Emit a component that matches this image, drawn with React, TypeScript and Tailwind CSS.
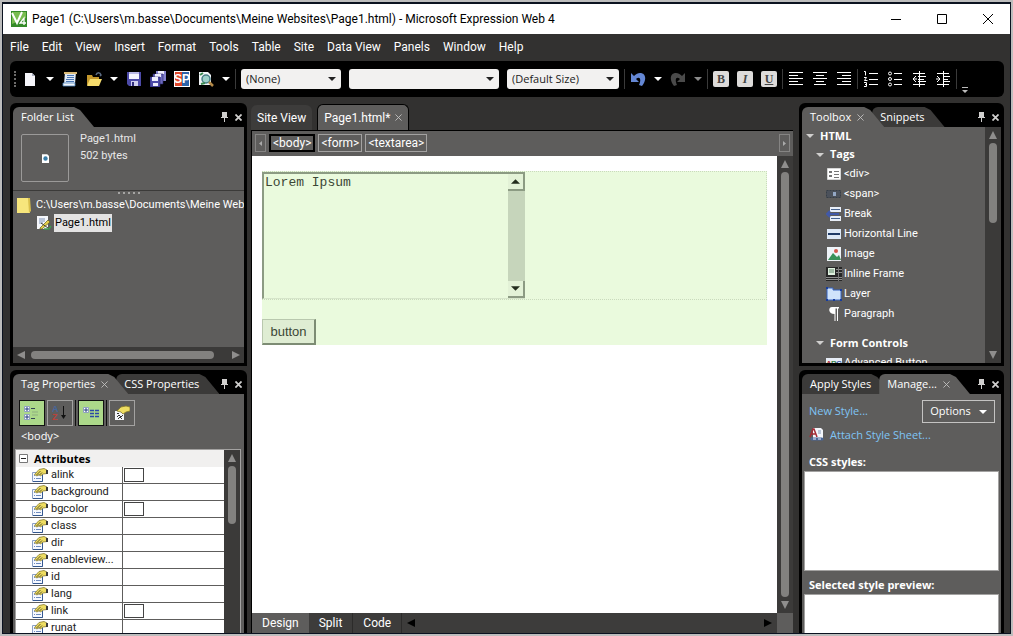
import { ReactNode } from "react"

const menuItems = ["File", "Edit", "View", "Insert", "Format", "Tools", "Table", "Site", "Data View", "Panels", "Window", "Help"]

const attributes = [
  { name: "alink", color: true },
  { name: "background" },
  { name: "bgcolor", color: true },
  { name: "class" },
  { name: "dir" },
  { name: "enableviewstate", label: "enableview..." },
  { name: "id" },
  { name: "lang" },
  { name: "link", color: true },
  { name: "runat" },
]

/* ---------- small helpers ---------- */

const Icon = ({ children }: { children: ReactNode }) => (
  <svg viewBox="0 0 16 16" className="w-4 h-4 shrink-0" aria-hidden="true">{children}</svg>
)

const Caret = ({ className = "fill-white" }: { className?: string }) => (
  <svg viewBox="0 0 8 4" className={`w-2 h-1 shrink-0 ${className}`} aria-hidden="true"><path d="M0 0h8L4 4z" /></svg>
)

const Arrow = ({ d, className = "fill-[#8f8e8d]" }: { d: string; className?: string }) => (
  <svg viewBox="0 0 8 8" className={`w-2 h-2 ${className}`} aria-hidden="true"><path d={d} /></svg>
)

const UP = "M0 8L4 0l4 8z"
const DOWN = "M0 0h8L4 8z"
const LEFT = "M8 0v8L0 4z"
const RIGHT = "M0 0v8l8-4z"

const CloseX = ({ className = "w-[7px] h-[7px] stroke-[#c4c3c2]", width = 1 }: { className?: string; width?: number }) => (
  <svg viewBox="0 0 8 8" className={className} strokeWidth={width} aria-hidden="true"><path d="M.5.5l7 7M7.5.5l-7 7" /></svg>
)

const VScroll = ({ thumb }: { thumb: string }) => (
  <div className="w-4 shrink-0 bg-[#3b3a39] flex flex-col items-center py-1 gap-1">
    <Arrow d={UP} />
    <div className="flex-1 w-2 min-h-0"><div className={`w-2 rounded bg-[#82817f] ${thumb}`} /></div>
    <Arrow d={DOWN} />
  </div>
)

const Separator = () => <span className="w-px h-5 bg-[#3a3a3a] -mx-[3px]" />

const ToolButton = ({ label, children }: { label: string; children: ReactNode }) => (
  <button aria-label={label} className="shrink-0">{children}</button>
)

const Select = ({ label, value, size }: { label: string; value: string; size: string }) => (
  <div className={`grid items-center shrink-0 ${size}`}>
    <select aria-label={label} className="col-start-1 row-start-1 appearance-none w-full h-full rounded-[3px] bg-[#f2f1f0] text-[#222] text-[11px] pl-[5px] pr-5">
      <option>{value}</option>
    </select>
    <div className="col-start-1 row-start-1 justify-self-end pr-[5px] pointer-events-none"><Caret className="fill-[#222]" /></div>
  </div>
)

/* ---------- panel with slanted tabs ---------- */

type TabInfo = { label: string; active?: boolean; closable?: boolean }

const Panel = ({ tabs, className, children }: { tabs: TabInfo[]; className: string; children: ReactNode }) => (
  <section className={`bg-black rounded-t-md px-[3px] pt-1 flex flex-col min-h-0 ${className}`}>
    <div className="flex items-end h-5 shrink-0">
      {tabs.map((tab) => (
        <button
          key={tab.label}
          className={`h-full flex items-center gap-[6px] pl-2 pr-5 -mr-[12px] rounded-tl-md text-[11px] text-white whitespace-nowrap [clip-path:polygon(0_0,calc(100%-20px)_0,calc(100%-14px)_3px,100%_100%,0_100%)] ${tab.active ? "bg-[#5e5d5c] relative z-10" : "bg-[#3b3a39]"}`}
        >
          {tab.label}
          {tab.closable && <CloseX />}
        </button>
      ))}
      <div className="ml-auto h-full flex items-center gap-[6px] pr-[2px]">
        <button aria-label="Pin">
          <svg viewBox="0 0 9 10" className="w-[9px] h-[10px] fill-[#d0cfce]" aria-hidden="true"><path d="M2 0h5v5h1v1H5v4H4V6H1V5h1z" /></svg>
        </button>
        <button aria-label="Close"><CloseX className="w-[7px] h-[7px] stroke-[#d0cfce]" width={2} /></button>
      </div>
    </div>
    <div className="flex-1 min-h-0 bg-[#5e5d5c] flex flex-col overflow-hidden">{children}</div>
  </section>
)

/* ---------- icons ---------- */

const FloppyIcon = () => (
  <Icon>
    <path d="M1 1h14v14H3l-2-2z" fill="#4c4aa8" />
    <path d="M3 1h10v7H3z" fill="#f4f4ff" />
    <path d="M3 1h10v2H3z" fill="#b9b8e6" />
    <path d="M5 10h7v5H5z" fill="#cfd0ee" />
    <path d="M6 11h2v4H6z" fill="#2f2d7c" />
  </Icon>
)

const PropIcon = () => (
  <Icon>
    <path d="M.5 5.500h10v9H.5z" fill="#f6f9ff" stroke="#8aa0c6" />
    <path d="M10.500 8v6.500H1" fill="none" stroke="#35588f" />
    <path d="M2 8.500h1M2 11.500h1M4 11.500h5" stroke="#6f8cc0" />
    <path d="M2.500 7.500L7 2.500l5-1 3 1.500v3.500l-4 .5-2.500 2-1.500-1.500-2 1.500z" fill="#eedd62" stroke="#85782c" strokeWidth=".8" />
    <path d="M4.500 8l4-4M7 8.500l3-3" stroke="#4d4720" strokeWidth=".9" />
    <path d="M14 3h2v4h-2z" fill="#3a3a3a" />
  </Icon>
)

const PageEditIcon = () => (
  <Icon>
    <path d="M1 1h11v13H1z" fill="#f5f7fb" />
    <path d="M3 4h6M3 6h6M3 8h4" stroke="#7f93b5" />
    <path d="M4 13l8-8 2 2-8 7H4z" fill="#e6cf4a" stroke="#5d5a20" strokeWidth=".7" />
    <path d="M8 14h5l2-3" stroke="#3f9a50" strokeWidth="1.500" fill="none" />
    <path d="M5 8l7 5" stroke="#443" />
  </Icon>
)

const UndoIcon = ({ flip, color }: { flip?: boolean; color: string }) => (
  <Icon>
    <g transform={flip ? "matrix(-1 0 0 1 16 0)" : undefined}>
      <path d="M1 2v9h8L6 8c3-3 6-1 3 6l3 1c5-6 4-13-2-13-2 0-4 1-6 3z" fill={color} />
    </g>
  </Icon>
)

const AlignIcon = ({ d }: { d: string }) => (
  <Icon><path d={d} stroke="#fff" strokeWidth="1" fill="none" /></Icon>
)

const StyleToggle = ({ label, className, children }: { label: string; className: string; children: string }) => (
  <button aria-label={label} className={`w-4 h-4 shrink-0 rounded-[2px] bg-[#dddbda] text-[#444] text-xs leading-4 font-bold font-['Liberation_Serif',serif] ${className}`}>{children}</button>
)

/* ---------- title, menu, toolbar ---------- */

const TitleBar = () => (
  <header className="h-[30px] shrink-0 bg-white flex items-center pl-2 text-black">
    <svg viewBox="0 0 16 16" className="w-4 h-4" aria-hidden="true">
      <path d="M0 0h16v16H0z" fill="#348a28" />
      <path d="M1 1h14v6L1 13z" fill="#79bd50" />
      <path d="M1 2l5 10 5-11" fill="none" stroke="#fff" strokeWidth="2" />
      <path d="M13 14V7l-4 5h6" fill="none" stroke="#fff" strokeWidth="1.300" />
    </svg>
    <h1 className="pl-[5px] text-xs whitespace-nowrap font-[Roboto,sans-serif]">Page1 (C:\Users\m.basse\Documents\Meine Websites\Page1.html) - Microsoft Expression Web 4</h1>
    <div className="ml-auto pr-[17px] flex items-center gap-9">
      <button aria-label="Minimize"><svg viewBox="0 0 10 10" className="w-[10px] h-[10px]"><path d="M0 5.500h10" stroke="#000" /></svg></button>
      <button aria-label="Maximize"><svg viewBox="0 0 10 10" className="w-[10px] h-[10px]"><path d="M.5.5h9v9h-9z" stroke="#000" fill="none" /></svg></button>
      <button aria-label="Close"><svg viewBox="0 0 10 10" className="w-[10px] h-[10px]"><path d="M0 0l10 10M10 0L0 10" stroke="#000" /></svg></button>
    </div>
  </header>
)

const MenuBar = () => (
  <nav className="h-[26px] mb-px shrink-0 flex items-center gap-[13px] pl-[7px] text-white text-xs font-[Roboto,sans-serif]">
    {menuItems.map((item) => <button key={item} className="whitespace-nowrap">{item}</button>)}
  </nav>
)

const Toolbar = () => (
  <div className="h-9 shrink-0 ml-[7px] mr-[6px] rounded-md bg-black flex items-center gap-2 pl-1 overflow-hidden">
    <span className="w-1 h-4 -mr-1 shrink-0 border-l-2 border-dotted border-[#6b6a69]" />
    <ToolButton label="New">
      <Icon><path d="M3 2h7l3 3v10H3z" fill="#f5f5fa" /><path d="M10 2v3h3z" fill="#a9afc0" /></Icon>
    </ToolButton>
    <ToolButton label="New options"><Caret /></ToolButton>
    <ToolButton label="Properties">
      <Icon>
        <path d="M3 1h11l-1 12H2z" fill="#dfeaf8" />
        <path d="M5 4.500h7M5 6.500h7M4 8.500h8M4 10.500h8" stroke="#4a77b5" />
        <path d="M2 1h13v2H2z" fill="#d9ba78" />
        <path d="M1 12h12v3H1z" fill="#f2f6fa" stroke="#4d83bd" strokeWidth=".8" />
      </Icon>
    </ToolButton>
    <ToolButton label="Open">
      <Icon>
        <path d="M1 4h5l1 2h6v8H1z" fill="#c4982c" />
        <path d="M4 8h12l-3 7H1z" fill="#f6dc6c" />
        <path d="M10 4c1-3 4-3 5 0l-1 1" stroke="#5b6b82" fill="none" strokeWidth="1.500" />
      </Icon>
    </ToolButton>
    <ToolButton label="Open options"><Caret /></ToolButton>
    <ToolButton label="Save"><FloppyIcon /></ToolButton>
    <ToolButton label="Save all">
      <Icon>
        <path d="M6 0h10v10H6z" fill="#8583cd" />
        <path d="M8 0h6v3H8z" fill="#eeeefc" />
        <path d="M3 3h10v10H3z" fill="#6b69bb" stroke="#25246a" strokeWidth=".6" />
        <path d="M5 3h6v3H5z" fill="#eeeefc" />
        <path d="M0 6h10v10H0z" fill="#4c4aa8" stroke="#25246a" strokeWidth=".6" />
        <path d="M2 6h6v4H2zM3 12h5v3H3z" fill="#eeeefc" />
      </Icon>
    </ToolButton>
    <ToolButton label="SuperPreview">
      <svg viewBox="0 0 16 16" className="w-4 h-4 font-['Liberation_Sans',sans-serif] font-bold">
        <path d="M0 0h16v16H0z" fill="#fff" />
        <path d="M1 1h7v14H1z" fill="#e0462a" />
        <path d="M8 1h7v14H8z" fill="#2c63a8" />
        <text x="0" y="12" fontSize="12" fill="#fff">S</text>
        <text x="8" y="12" fontSize="12" fill="#fff">P</text>
      </svg>
    </ToolButton>
    <ToolButton label="Preview">
      <Icon>
        <path d="M1 1h9l3 3v10H1z" fill="#f2f5f8" />
        <circle cx="8" cy="8" r="4" fill="#9cd0c8" stroke="#477d85" strokeWidth="1.500" />
        <path d="M2 4l3-2M3 13l4-1" stroke="#3b8b52" strokeWidth="2" />
        <path d="M11 11l4 4" stroke="#b48a48" strokeWidth="2.500" />
      </Icon>
    </ToolButton>
    <ToolButton label="Preview options"><Caret /></ToolButton>
    <Separator />
    <Select label="Style" value="(None)" size="w-[100px] h-5" />
    <Select label="Font" value="" size="w-[150px] h-5" />
    <Select label="Font size" value="(Default Size)" size="w-28 h-5" />
    <Separator />
    <ToolButton label="Undo"><UndoIcon color="#6487d4" /></ToolButton>
    <ToolButton label="Undo history"><Caret /></ToolButton>
    <ToolButton label="Redo"><UndoIcon flip color="#4a4a4a" /></ToolButton>
    <ToolButton label="Redo history"><Caret className="fill-[#8b8b8b]" /></ToolButton>
    <Separator />
    <StyleToggle label="Bold" className="">B</StyleToggle>
    <StyleToggle label="Italic" className="italic">I</StyleToggle>
    <StyleToggle label="Underline" className="underline">U</StyleToggle>
    <Separator />
    <ToolButton label="Align left"><AlignIcon d="M1 1.500h14M1 4.500h9M1 7.500h14M1 10.500h9M1 13.500h14" /></ToolButton>
    <ToolButton label="Center"><AlignIcon d="M1 1.500h14M4 4.500h8M1 7.500h14M4 10.500h8M2 13.500h12" /></ToolButton>
    <ToolButton label="Align right"><AlignIcon d="M1 1.500h14M6 4.500h9M1 7.500h14M6 10.500h9M1 13.500h14" /></ToolButton>
    <Separator />
    <ToolButton label="Numbering"><AlignIcon d="M6 2.500h9M6 8.500h9M6 13.500h9M1 .5h1.500v4M1 6.500h2.500L1.500 9.500h3M1 11.500h2.500v4H1M2 13.500h1" /></ToolButton>
    <ToolButton label="Bullets">
      <Icon>
        <path d="M7 2.500h8M7 8.500h8M7 13.500h8" stroke="#fff" />
        <g fill="none" stroke="#fff"><circle cx="3" cy="2.500" r="1.500" /><circle cx="3" cy="8" r="1.500" /><circle cx="3" cy="13.500" r="1.500" /></g>
      </Icon>
    </ToolButton>
    <ToolButton label="Decrease indent"><AlignIcon d="M2 2.500h12M7 5.500h8M7 8.500h6M7 10.500h8M2 13.500h12M8.500 0v16M5 5L2 8l3 3M2 8h4" /></ToolButton>
    <ToolButton label="Increase indent"><AlignIcon d="M2 2.500h12M8 5.500h7M8 8.500h5M8 10.500h7M2 13.500h12M8.500 0v16M2 5l3 3-3 3M1 8h4" /></ToolButton>
    <Separator />
    <button aria-label="More" className="self-end pb-1"><svg viewBox="0 0 6 6" className="w-[6px] h-[6px] fill-[#bbb]"><path d="M0 0h6v1H0zM0 3h6L3 6z" /></svg></button>
  </div>
)

/* ---------- left column ---------- */

const FolderList = () => (
  <Panel className="h-[263px] shrink-0 pb-[3px]" tabs={[{ label: "Folder List", active: true }]}>
    <div className="h-16 shrink-0 border-b border-[#3b3a39] flex gap-[11px] pl-2 pt-[7px] text-[11px] text-[#e8e8e8] font-[Roboto,sans-serif]">
      <div className="w-12 h-12 rounded-[2px] border border-[#9b9a99] grid place-items-center">
        <svg viewBox="0 0 8 10" className="w-[7px] h-[9px]" aria-hidden="true"><path d="M0 0h6l2 2v8H0z" fill="#fff" /><circle cx="4" cy="5" r="2.500" fill="#397da8" /></svg>
      </div>
      <div className="leading-[17px] -mt-1">
        <p>Page1.html</p>
        <p>502 bytes</p>
      </div>
    </div>
    <div className="flex justify-center gap-[3px] pt-px">
      {[0, 1, 2, 3, 4].map((n) => <i key={n} className="w-[2px] h-[2px] bg-[#a5a4a3]" />)}
    </div>
    <ul className="flex-1 overflow-hidden text-[11px] text-white whitespace-nowrap pt-[2px] font-[Roboto,sans-serif]">
      <li className="flex items-center h-[18px] gap-[5px] pl-1">
        <svg viewBox="0 0 14 16" className="w-[14px] h-4 shrink-0" aria-hidden="true"><path d="M0 1h13v15H0z" fill="#f7e67c" /><path d="M11 1h2l1 13-2 2z" fill="#d9c04c" /></svg>
        C:\Users\m.basse\Documents\Meine Websites
      </li>
      <li className="flex items-center h-[18px] gap-[2px] pl-[23px]">
        <PageEditIcon />
        <span className="bg-[#e4e3e3] text-black px-px leading-[18px]">Page1.html</span>
      </li>
    </ul>
    <div className="h-4 shrink-0 bg-[#3b3a39] flex items-center gap-[6px] px-1">
      <Arrow d={LEFT} />
      <div className="flex-1"><div className="h-2 w-[94%] rounded bg-[#82817f]" /></div>
      <Arrow d={RIGHT} />
    </div>
  </Panel>
)

const SquareButton = ({ label, on, children }: { label: string; on?: boolean; children: ReactNode }) => (
  <button aria-label={label} className={`w-[26px] h-[26px] border grid place-items-center ${on ? "bg-[#acd88a] border-[#111]" : "border-[#a3a2a1]"}`}>{children}</button>
)

const TagProperties = () => (
  <Panel className="flex-1" tabs={[{ label: "Tag Properties", active: true, closable: true }, { label: "CSS Properties" }]}>
    <div className="flex items-center gap-[2px] pl-[6px] pt-[6px]">
      <SquareButton label="Categorized" on>
        <Icon>
          <path d="M.5 1.500h5v5h-5zM.5 9.500h5v5h-5z" fill="#fff" stroke="#8ea0c0" />
          <path d="M3 2v4M1 4h4M3 10v4M1 12h4" stroke="#223a80" />
          <path d="M7 3.500h4M7 13.500h4" stroke="#345" /><path d="M8 7h6M8 10h6" stroke="#8fae80" />
        </Icon>
      </SquareButton>
      <SquareButton label="Alphabetical">
        <svg viewBox="0 0 16 16" className="w-4 h-4 font-['Liberation_Sans',sans-serif] font-bold">
          <text x="0" y="7" fontSize="9" fill="#46669c">A</text>
          <text x="0" y="15" fontSize="9" fill="#b8433c">Z</text>
          <path d="M11 1h1v9h2l-2.500 4L9 10h2z" fill="#111" />
        </svg>
      </SquareButton>
      <span className="w-px h-[26px] bg-[#111]" />
      <SquareButton label="Set properties on top" on>
        <Icon>
          <path d="M.5 2.500h5v5h-5z" fill="#fff" stroke="#8ea0c0" />
          <path d="M3 3v4M1 5h4" stroke="#223a80" />
          <path d="M7 5.500h4M12 5.500h4M7 8.500h4M12 8.500h4M7 11.500h4M12 11.500h4" stroke="#2b48a8" strokeWidth="1.500" />
        </Icon>
      </SquareButton>
      <span className="w-px h-[26px] bg-[#111]" />
      <SquareButton label="Tag properties">
        <Icon>
          <path d="M1 6h9v9H1z" fill="#f4f6fa" />
          <path d="M3 8.500h2M3 12l2-2 2 2 2-2M4 14l2-2 2 2" fill="none" stroke="#333" />
          <path d="M3 6l4-4 5-1 4 1v4l-4 1-3 2-2-2z" fill="#eedd62" stroke="#85782c" strokeWidth=".8" />
        </Icon>
      </SquareButton>
    </div>
    <p className="text-[11px] leading-4 text-white pl-2 pt-[2px]">&lt;body&gt;</p>
    <div className="mt-[5px] ml-[2px] mr-[3px] flex-1 min-h-0 flex border border-b-0 border-[#a3a2a1] overflow-hidden">
      <div className="flex-1 min-w-0 bg-white">
        <table className="w-full table-fixed border-separate border-spacing-0 text-[11px] text-[#222] leading-4">
          <colgroup><col className="w-[107px]" /><col /></colgroup>
          <thead>
            <tr className="h-[17px] bg-[#f1f0ef]">
              <th colSpan={2} className="p-0 text-left">
                <span className="flex items-center gap-[6px] pl-[3px] text-[11px] leading-[17px] text-black">
                  <svg viewBox="0 0 9 9" className="w-[9px] h-[9px]" aria-hidden="true"><path d="M.5.5h8v8h-8z" fill="#fff" stroke="#777" /><path d="M2 4.500h5" stroke="#222" /></svg>
                  Attributes
                </span>
              </th>
            </tr>
          </thead>
          <tbody className="font-[Roboto,sans-serif]">
            {attributes.map((attr) => (
              <tr key={attr.name} className="h-[17px]">
                <td className="p-0 border-r border-b border-[#5e5d5c]">
                  <span className="flex items-center gap-[3px] h-4 pl-4 whitespace-nowrap leading-[18px]"><PropIcon />{attr.label ?? attr.name}</span>
                </td>
                <td className="p-0 border-b border-[#5e5d5c]">{attr.color && <button aria-label={`${attr.name} color`} className="block w-5 h-[14px] ml-px border border-[#444] bg-white" />}</td>
              </tr>
            ))}
          </tbody>
        </table>
      </div>
      <div className="w-4 shrink-0 bg-[#3b3a39] flex flex-col items-center py-1 gap-1">
        <Arrow d={UP} />
        <div className="w-2 h-[58px] rounded bg-[#82817f]" />
      </div>
    </div>
  </Panel>
)

/* ---------- editor ---------- */

const TagChip = ({ label, active }: { label: string; active?: boolean }) => (
  <button className={`h-[18px] px-[2px] text-xs text-white ${active ? "border-2 border-black leading-[14px]" : "border border-[#a3a2a1] leading-4"}`}>{label}</button>
)

const Editor = () => (
  <main className="flex-1 min-w-0 flex flex-col pt-px font-[Roboto,sans-serif]">
    <div className="flex items-end h-[26px] shrink-0 text-xs text-white">
      <button className="h-[25px] px-[6px] mr-[5px] bg-[#3d3c3b] rounded-t-md">Site View</button>
      <button className="h-[26px] px-[6px] flex items-center gap-[5px] bg-[#5e5d5c] border border-b-0 border-black rounded-t-md">Page1.html* <CloseX /></button>
    </div>
    <div className="h-[26px] shrink-0 border-t border-l border-black bg-[#5e5d5c] flex items-center gap-[3px] px-[3px] pb-px">
      <button aria-label="Scroll tags left" className="w-[11px] h-[18px] border border-[#858483] grid place-items-center"><svg viewBox="0 0 3 5" className="w-[3px] h-[5px] fill-[#aaa]"><path d="M3 0v5L0 2.500z" /></svg></button>
      <TagChip label="<body>" active />
      <TagChip label="<form>" />
      <TagChip label="<textarea>" />
      <button aria-label="Scroll tags right" className="ml-auto w-[11px] h-[18px] border border-[#858483] grid place-items-center"><svg viewBox="0 0 3 5" className="w-[3px] h-[5px] fill-[#aaa]"><path d="M0 0v5l3-2.500z" /></svg></button>
    </div>
    <div className="flex-1 min-h-0 flex border-l border-black">
      <div className="flex-1 min-w-0 bg-white pl-[10px] pr-[10px] pt-[15px]">
        <form className="bg-[#eafadd] text-[#3c4735]" onSubmit={(e) => e.preventDefault()}>
          <div className="border border-dotted border-[#c9dabc] border-l-0 h-[129px] flex items-start">
            <div className="w-[263px] h-[127px] flex border-t-2 border-l-2 border-[#8c9b83] border-b border-b-[#d6e5ca]">
              <textarea aria-label="Text" defaultValue="Lorem Ipsum" className="flex-1 min-w-0 h-full resize-none overflow-hidden bg-transparent outline-none pl-px pt-px font-['Liberation_Mono',monospace] text-[13px] leading-4" />
              <div className="w-[17px] bg-[#c6d5bb] flex flex-col justify-between">
                <button aria-label="Scroll up" type="button" className="h-[17px] grid place-items-center bg-[#e3f2d7] border-r-2 border-b-2 border-[#8c9b83]"><svg viewBox="0 0 10 5" className="w-[9px] h-[5px]"><path d="M0 5h10L5 0z" fill="#222c1c" /></svg></button>
                <button aria-label="Scroll down" type="button" className="h-[17px] grid place-items-center bg-[#e3f2d7] border-r-2 border-b-2 border-[#8c9b83]"><svg viewBox="0 0 10 5" className="w-[9px] h-[5px]"><path d="M0 0h10L5 5z" fill="#222c1c" /></svg></button>
              </div>
            </div>
          </div>
          <button className="mt-[19px] block w-[54px] h-[26px] bg-[#dfedd3] border border-[#b9c8ae] border-r-2 border-b-2 border-r-[#7d8c74] border-b-[#7d8c74] font-['Liberation_Sans',sans-serif] text-[13px]">button</button>
        </form>
      </div>
      <VScroll thumb="h-full" />
    </div>
    <div className="h-5 shrink-0 flex items-center bg-[#3d3c3b] border-l border-black text-xs text-white">
      <button className="h-full px-[10px] bg-[#5e5d5c]">Design</button>
      <button className="h-full px-[10px] border-r border-[#2c2b2a]">Split</button>
      <button className="h-full px-[10px] border-r border-[#2c2b2a]">Code</button>
      <div className="flex-1 flex justify-between px-[5px]">
        <Arrow d={LEFT} className="fill-black" />
        <Arrow d={RIGHT} className="fill-black" />
      </div>
      <div className="w-4 h-full bg-[#5e5d5c]" />
    </div>
  </main>
)

/* ---------- right column ---------- */

const tools: { label: string; icon: ReactNode }[] = [
  { label: "<div>", icon: <><path d="M1.500 2.500h13v11h-13z" fill="#fff" stroke="#fff" strokeDasharray="1 1" /><path d="M2 3h12v10H2z" fill="#fff" /><path d="M3 5h3v2H3zM3 9h3v2H3zM8 5h5v1H8zM8 8h5v1H8zM8 11h5v1H8z" fill="#777" /></> },
  { label: "<span>", icon: <><path d="M.5 4.500h14v7H.5z" fill="#4b515b" stroke="#363e49" strokeDasharray="2 1" /><path d="M7 6h3v4H7z" fill="#93a7c5" /></> },
  { label: "Break", icon: <><path d="M4 1h11v5H4zM4 10h11v5H4z" fill="#e8eef8" /><path d="M5 3.500h9M5 12.500h9" stroke="#46628e" /><path d="M13 8H2M4 5L1 8l3 3" stroke="#4159a8" strokeWidth="2" fill="none" /></> },
  { label: "Horizontal Line", icon: <><path d="M1 3h14v10H1z" fill="#dde8f6" /><path d="M2 8h12" stroke="#1f3a66" strokeWidth="2" /></> },
  { label: "Image", icon: <><path d="M1 1h14v14H1z" fill="#eef3f8" /><path d="M2 14l5-7 4 4 2-2 2 5z" fill="#37915a" /><circle cx="10" cy="5" r="2" fill="#d3574c" /></> },
  { label: "Inline Frame", icon: <><path d="M0 1h16v14H0z" fill="#262626" /><path d="M2 2h7v7H2z" fill="#dff0df" /><path d="M3 4h5M3 6h5" stroke="#5f8468" /><path d="M10 3.500h6M10 6.500h6M0 11.500h16M0 13.500h16" stroke="#8b8b8b" /><path d="M12.500 1v14" stroke="#777" /></> },
  { label: "Layer", icon: <><path d="M1 2h6v2h8v10H1z" fill="#cfe3fb" stroke="#3563bf" /><path d="M0 1h2v2H0zM14 3h2v2h-2zM0 13h2v2H0zM14 13h2v2h-2zM7 13h2v2H7z" fill="#173c9c" /></> },
  { label: "Paragraph", icon: <path d="M6 1h7v1.500h-1V15h-1V2.500H9.500V15h-1V8C2 8 2 1 6 1z" fill="#fff" /> },
]

const Heading = ({ children, className }: { children: string; className: string }) => (
  <h3 className={`flex items-center gap-[6px] text-[11px] font-bold text-white ${className}`}><Caret className="fill-[#d0cfce]" />{children}</h3>
)

const Toolbox = () => (
  <Panel className="h-[263px] shrink-0 pb-[3px]" tabs={[{ label: "Toolbox", active: true, closable: true }, { label: "Snippets" }]}>
    <div className="flex-1 min-h-0 flex">
      <div className="flex-1 min-w-0 overflow-hidden">
        <Heading className="h-[18px] pl-1">HTML</Heading>
        <Heading className="h-[19px] pl-[14px]">Tags</Heading>
        <ul className="text-[11px] text-white font-[Roboto,sans-serif]">
          {tools.map((tool) => (
            <li key={tool.label} className="h-5 flex items-center gap-[2px] pl-6"><Icon>{tool.icon}</Icon>{tool.label}</li>
          ))}
        </ul>
        <Heading className="h-5 mt-[9px] pl-[14px]">Form Controls</Heading>
        <p className="h-5 flex items-center gap-[2px] pl-6 text-[11px] text-white font-[Roboto,sans-serif]">
          <svg viewBox="0 0 16 16" className="w-4 h-4 font-['Liberation_Sans',sans-serif] font-bold" aria-hidden="true">
            <path d="M0 3h16v11H0z" fill="#e6ecf5" />
            <text x="0" y="11" fontSize="8" fill="#b23a3a">A</text>
            <text x="5" y="11" fontSize="8" fill="#39854a">B</text>
            <text x="10" y="11" fontSize="8" fill="#34569d">C</text>
          </svg>
          Advanced Button
        </p>
      </div>
      <VScroll thumb="h-20" />
    </div>
  </Panel>
)

const ManageStyles = () => (
  <Panel className="flex-1" tabs={[{ label: "Apply Styles" }, { label: "Manage...", active: true, closable: true }]}>
    <div className="flex items-start justify-between pl-[7px] pr-[6px] pt-[6px] text-[11px]">
      <a href="#new-style" className="text-[#7fc4f5] pt-px leading-5">New Style...</a>
      <button className="h-[23px] w-[73px] border border-[#c4c3c2] text-white flex items-center justify-center gap-2">Options <Caret /></button>
    </div>
    <a href="#attach" className="flex items-center gap-[5px] h-6 pl-[7px] text-[11px] text-[#7fc4f5]">
      <Icon>
        <path d="M4 1h8l2 2v10H4z" fill="#f3f6fb" />
        <path d="M1 10L4 2h1l3 8M2.500 7h4" fill="none" stroke="#a52a34" strokeWidth="1.500" />
        <path d="M9 4h3M9 6h3" stroke="#8396b5" />
        <path d="M3 12h5M8 12h5" stroke="#4a6796" strokeWidth="3" strokeLinecap="round" /><path d="M4 12h3M9 12h3" stroke="#eef" />
      </Icon>
      Attach Style Sheet...
    </a>
    <h3 className="pl-[7px] mt-[7px] h-[15px] leading-4 text-[11px] font-bold text-white mb-[2px]">CSS styles:</h3>
    <div className="mx-[2px] h-[100px] shrink-0 bg-white border border-[#a3a2a1]" />
    <h3 className="pl-[7px] pt-[6px] h-[23px] shrink-0 leading-4 text-[11px] font-bold text-white">Selected style preview:</h3>
    <div className="mx-[2px] flex-1 bg-white border border-b-0 border-[#a3a2a1]" />
  </Panel>
)

export default function App() {
  return (
    <div className="h-screen bg-[#bdbdbd] p-[2px] font-['Open_Sans',sans-serif]">
      <div className="h-full bg-[#323130] border border-[#0b1220] border-t-2 flex flex-col overflow-hidden">
        <TitleBar />
        <MenuBar />
        <Toolbar />
        <div className="flex-1 min-h-0 flex gap-1 pt-[6px] pl-[7px] pr-[6px]">
          <aside className="w-[237px] shrink-0 flex flex-col gap-1">
            <FolderList />
            <TagProperties />
          </aside>
          <Editor />
          <aside className="w-[205px] shrink-0 flex flex-col gap-1 ml-[2px]">
            <Toolbox />
            <ManageStyles />
          </aside>
        </div>
      </div>
    </div>
  )
}
